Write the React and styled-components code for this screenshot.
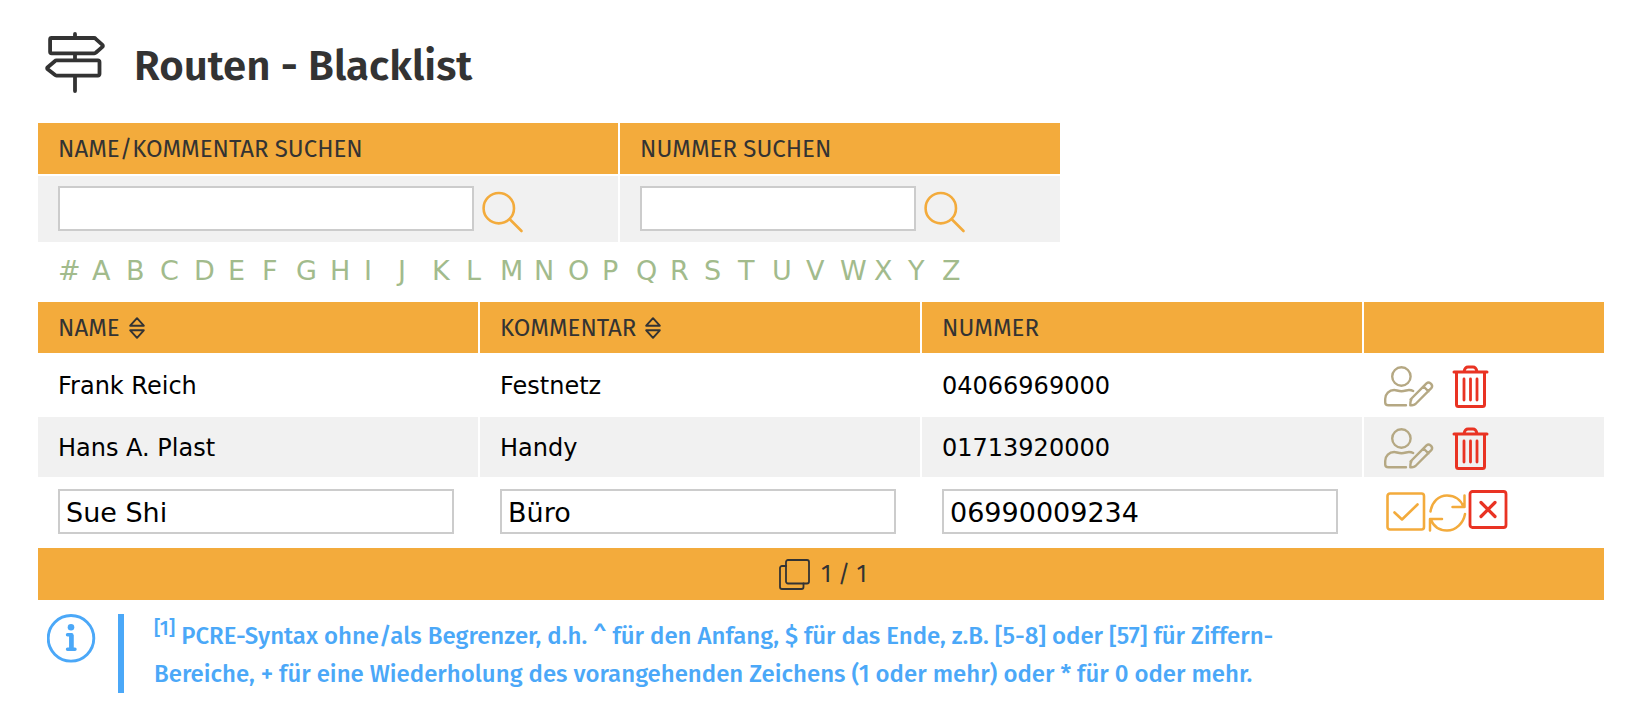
import React from "react";
import styled, { createGlobalStyle } from "styled-components";

const GlobalStyle = createGlobalStyle`
  body {
    margin: 0;
    background: #fff;
    color: #000;
    font-family: Verdana, "DejaVu Sans", sans-serif;
    font-size: 24px;
  }
  *, *::before, *::after {
    box-sizing: border-box;
  }
`;

const Page = styled.main`
  padding: 32px 30px 32px 36px;
`;

const TitleBar = styled.header`
  display: flex;
  align-items: center;
  gap: 28px;
  height: 60px;
  margin: 0 0 29px 9px;
  color: #333;
`;

const Title = styled.h1`
  margin: 0;
  padding-top: 8px;
  font-family: "Fira Sans", "Noto Sans", sans-serif;
  font-size: 42px;
  font-weight: 600;
  line-height: 52px;
`;

const Table = styled.table`
  width: ${(props) => props.$width || "100%"};
  table-layout: fixed;
  border-spacing: 2px;
`;

const Col = styled.col`
  width: ${(props) => props.$width || "auto"};
`;

const HeadCell = styled.th`
  height: 51px;
  padding: 0 20px;
  background: #f3ab3c;
  color: #333;
  font-family: "Fira Sans", "Open Sans", sans-serif;
  font-size: 24px;
  font-weight: 400;
  text-align: left;
  text-transform: uppercase;
`;

const HeadLabel = styled.span`
  display: flex;
  align-items: center;
  gap: 9px;
`;

const Cell = styled.td`
  height: 60px;
  padding: 2px 20px 0;
  background: ${(props) => (props.$shaded ? "#f1f1f1" : "#fff")};
`;

const FormCell = styled.td`
  padding: 10px 24px 12px 20px;
  background: #fff;
`;

const SearchCell = styled.td`
  padding: 10px 20px 11px;
  background: #f1f1f1;
`;

const FootCell = styled.td`
  height: 52px;
  padding: 0;
  background: #f3ab3c;
  color: #333;
  font-family: "Fira Sans", "Open Sans", sans-serif;
`;

const Pager = styled.div`
  display: flex;
  align-items: center;
  justify-content: center;
  gap: 11px;
  padding-left: 4px;
`;

const Input = styled.input`
  display: block;
  width: ${(props) => props.$width || "100%"};
  height: 45px;
  padding: 2px 6px 0;
  border: 2px solid #ccc;
  border-radius: 0;
  background: #fff;
  color: #000;
  font-family: inherit;
  font-size: 27px;
`;

const SearchField = styled.div`
  display: flex;
  gap: 8px;
`;

const Actions = styled.div`
  display: flex;
  align-items: center;
  gap: ${(props) => props.$gap || "0"};
  padding-left: ${(props) => props.$indent || "0"};
`;

const IconButton = styled.button`
  display: flex;
  padding: 0;
  border: 0;
  background: none;
  color: ${(props) => props.$color || "inherit"};
  cursor: pointer;

  svg {
    display: block;
    overflow: visible;
  }
`;

const Letters = styled.nav`
  display: grid;
  grid-template-columns: repeat(27, 34px);
  height: 56px;
  padding: 10px 0 0 22px;
`;

const Letter = styled.a`
  color: #a2bb8c;
  font-size: 27px;
  line-height: 34px;
  text-decoration: none;
`;

const Info = styled.section`
  display: flex;
  align-items: flex-start;
  gap: 22px;
  margin: 12px 0 0 11px;
  color: #4ba8f8;
`;

const InfoText = styled.p`
  margin: 0;
  padding: 3px 0 0 30px;
  border-left: 6px solid #4ba8f8;
  font-family: "Fira Sans", "Open Sans", sans-serif;
  font-weight: 500;
  line-height: 38px;
`;

const Sup = styled.sup`
  font-size: 20px;
  line-height: 0;
`;

const Icon = ({ width, height, weight = 2, children }) => (
  <svg
    width={width}
    height={height}
    viewBox={`0 0 ${width} ${height}`}
    fill="none"
    stroke="currentColor"
    strokeWidth={weight}
    strokeLinecap="round"
    strokeLinejoin="round"
    aria-hidden="true"
  >
    {children}
  </svg>
);

const SignpostIcon = () => (
  <Icon width={61} height={61} weight={3.8}>
    <path d="M30 2V6M30 22v6M30 44v15" />
    <path d="M6.6 6H49q1 0 1.7.8l7 6.3a1.500 1.500 0 0 1 0 1.500L51 20.500q-.7.8-1.7.8H6.600a1.500 1.500 0 0 1-1.500-1.500V7.500A1.500 1.500 0 0 1 6.600 6z" />
    <path d="M53 28.400H11.500q-1 0-1.700.8L2.400 35.500a1.500 1.500 0 0 0 0 1.500l7.400 5.800q.7.8 1.700.8H53a1.500 1.500 0 0 0 1.500-1.500V29.900a1.500 1.500 0 0 0-1.500-1.500z" />
  </Icon>
);

const SearchIcon = () => (
  <Icon width={42} height={45} weight={2.6}>
    <circle cx="16.8" cy="22.2" r="15.2" />
    <path d="M28 33.5l11.5 11.5" />
  </Icon>
);

const SortIcon = () => (
  <Icon width={16} height={22} weight={1.9}>
    <path d="M8 1.2L1.2 8.7h13.6zM8 20.8l-6.8-7.5h13.6z" />
  </Icon>
);

const EditUserIcon = () => (
  <Icon width={50} height={41} weight={2.4}>
    <circle cx="17.4" cy="10.5" r="9.2" />
    <path d="M22 39.3H4.5C2.500 39.300 1.200 38 1.200 36.500V33c0-5 4-9 9-9 2 0 4 1.200 7.300 1.200s5.300-1.200 7.500-1.200c1.500 0 3 .3 4.200 1" />
    <path d="M26.500 33.500L42.500 17.300q2-1.700 4 0l.8.8q1.700 2 0 4L31.500 38q-1.500 1.200-3.500 1.300l-1.700.1.100-2.600q0-2 1-3.300zM39.500 20.500l5 4.800" />
  </Icon>
);

const TrashIcon = () => (
  <Icon width={37} height={43} weight={3}>
    <path d="M2 7h33M4.500 7v32.500q0 2 2 2h24q2 0 2-2V7M12 6.500q1-4.500 4-4.500h5q3 0 4 4.500" />
    <path d="M12 14v21M18.500 14v21M25 14v21" strokeWidth="2.8" />
  </Icon>
);

const SaveIcon = () => (
  <Icon width={40} height={39} weight={2.6}>
    <rect x="1.5" y="1.5" width="36.5" height="36" rx="2.5" />
    <path d="M8.5 20.5l7.5 7L31.5 12.5" />
  </Icon>
);

const ReloadIcon = () => (
  <Icon width={38} height={40} weight={2.5}>
    <path d="M2.5 19.5C4 10 10.5 3.5 19 3.5c7.500 0 14 4 16.500 11.500M36.500 3.500V15H24.500" />
    <path d="M37 22c-1.500 9-9 16.500-18 16.500C11.500 38.500 5.500 34.500 2.500 27M2 38.500V27H14" />
  </Icon>
);

const CancelIcon = () => (
  <Icon width={40} height={43} weight={2.8}>
    <rect x="2" y="1.5" width="36" height="36" rx="2.5" />
    <path d="M13 12.5l14 14M27 12.5l-14 14" strokeWidth="3.2" />
  </Icon>
);

const PagesIcon = () => (
  <Icon width={31} height={31} weight={1.8}>
    <rect x="7" y="1" width="23" height="23.5" rx="2" />
    <path d="M7 7H3a2 2 0 0 0-2 2V28a2 2 0 0 0 2 2h19.500a2 2 0 0 0 2-2v-3.500" />
  </Icon>
);

const InfoIcon = () => (
  <Icon width={49} height={49} weight={2.9}>
    <circle cx="24" cy="24.3" r="22.8" />
    <circle cx="24" cy="13.3" r="3.3" fill="currentColor" stroke="none" />
    <path d="M20.5 20.8H24.800V35M20.500 35.300h7.500" strokeWidth="3.4" />
    <path d="M24.3 21v14" strokeWidth="4.5" strokeLinecap="butt" />
  </Icon>
);

const letters = "#ABCDEFGHIJKLMNOPQRSTUVWXYZ".split("");

const routes = [
  { name: "Frank Reich", comment: "Festnetz", number: "04066969000" },
  { name: "Hans A. Plast", comment: "Handy", number: "01713920000" },
];

const Search = ({ id, width }) => (
  <SearchField>
    <Input id={id} type="text" $width={width} />
    <IconButton type="button" aria-label="Suchen" $color="#f3ab3c">
      <SearchIcon />
    </IconButton>
  </SearchField>
);

const SearchTable = () => (
  <Table $width="1026px">
    <colgroup>
      <Col $width="580px" />
      <Col $width="440px" />
    </colgroup>
    <thead>
      <tr>
        <HeadCell>
          <label htmlFor="search-name">Name/Kommentar suchen</label>
        </HeadCell>
        <HeadCell>
          <label htmlFor="search-number">Nummer suchen</label>
        </HeadCell>
      </tr>
    </thead>
    <tbody>
      <tr>
        <SearchCell>
          <Search id="search-name" width="416px" />
        </SearchCell>
        <SearchCell>
          <Search id="search-number" width="276px" />
        </SearchCell>
      </tr>
    </tbody>
  </Table>
);

const RouteTable = () => (
  <Table>
    <colgroup>
      <Col />
      <Col />
      <Col />
      <Col $width="240px" />
    </colgroup>
    <thead>
      <tr>
        <HeadCell>
          <HeadLabel>
            Name
            <IconButton type="button" aria-label="Nach Name sortieren">
              <SortIcon />
            </IconButton>
          </HeadLabel>
        </HeadCell>
        <HeadCell>
          <HeadLabel>
            Kommentar
            <IconButton type="button" aria-label="Nach Kommentar sortieren">
              <SortIcon />
            </IconButton>
          </HeadLabel>
        </HeadCell>
        <HeadCell>Nummer</HeadCell>
        <HeadCell />
      </tr>
    </thead>
    <tbody>
      {routes.map((route, index) => (
        <tr key={route.number}>
          <Cell $shaded={index % 2 === 1}>{route.name}</Cell>
          <Cell $shaded={index % 2 === 1}>{route.comment}</Cell>
          <Cell $shaded={index % 2 === 1}>{route.number}</Cell>
          <Cell $shaded={index % 2 === 1}>
            <Actions $gap="18px">
              <IconButton type="button" aria-label="Bearbeiten" $color="#b5a883">
                <EditUserIcon />
              </IconButton>
              <IconButton type="button" aria-label="Löschen" $color="#e93323">
                <TrashIcon />
              </IconButton>
            </Actions>
          </Cell>
        </tr>
      ))}
      <tr>
        <FormCell>
          <Input type="text" aria-label="Name" defaultValue="Sue Shi" />
        </FormCell>
        <FormCell>
          <Input type="text" aria-label="Kommentar" defaultValue="Büro" />
        </FormCell>
        <FormCell>
          <Input type="text" aria-label="Nummer" defaultValue="06990009234" />
        </FormCell>
        <FormCell>
          <Actions $gap="2px" $indent="2px">
            <IconButton type="button" aria-label="Speichern" $color="#f3ab3c">
              <SaveIcon />
            </IconButton>
            <IconButton type="button" aria-label="Zurücksetzen" $color="#f3ab3c">
              <ReloadIcon />
            </IconButton>
            <IconButton type="button" aria-label="Abbrechen" $color="#e93323">
              <CancelIcon />
            </IconButton>
          </Actions>
        </FormCell>
      </tr>
    </tbody>
    <tfoot>
      <tr>
        <FootCell colSpan={4}>
          <Pager>
            <PagesIcon />
            <span>1 / 1</span>
          </Pager>
        </FootCell>
      </tr>
    </tfoot>
  </Table>
);

export default () => {
  return (
    <Page>
      <GlobalStyle />
      <TitleBar>
        <SignpostIcon />
        <Title>Routen - Blacklist</Title>
      </TitleBar>
      <SearchTable />
      <Letters aria-label="Anfangsbuchstabe">
        {letters.map((letter) => (
          <Letter key={letter} href={`#${letter}`}>
            {letter}
          </Letter>
        ))}
      </Letters>
      <RouteTable />
      <Info>
        <InfoIcon />
        <InfoText>
          <Sup>[1]</Sup> PCRE-Syntax ohne/als Begrenzer, d.h. ^ für den Anfang,
          $ für das Ende, z.B. [5-8] oder [57] für Ziffern-
          <br />
          Bereiche, + für eine Wiederholung des vorangehenden Zeichens (1 oder
          mehr) oder * für 0 oder mehr.
        </InfoText>
      </Info>
    </Page>
  );
};
